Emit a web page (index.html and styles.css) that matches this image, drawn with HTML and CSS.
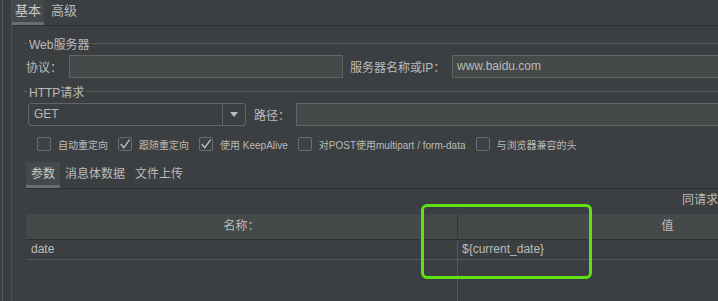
FILE: index.html
```html
<!DOCTYPE html>
<html lang="zh">
<head>
<meta charset="utf-8">
<title>HTTP请求</title>
<link rel="stylesheet" href="styles.css">
</head>
<body>
<div class="app">
  <div class="frame">
    <div class="main">
      <div class="tabs top">
        <div class="tab active">基本</div>
        <div class="tab">高级</div>
      </div>
      <div class="content">
        <div class="group-title"><span>Web服务器</span></div>
        <div class="row r1">
          <span class="lbl proto">协议：</span>
          <div class="field w-proto"></div>
          <span class="lbl host">服务器名称或IP：</span>
          <div class="field grow">www.baidu.com</div>
        </div>
        <div class="group-title g2"><span>HTTP请求</span></div>
        <div class="row r2">
          <div class="select">
            <span class="sel-val">GET</span>
            <span class="sel-btn"><svg width="8" height="5" viewBox="0 0 8 5"><polygon points="0,0 8,0 4,5" fill="#bbbbbb"/></svg></span>
          </div>
          <span class="lbl path">路径：</span>
          <div class="field grow"></div>
        </div>
        <div class="checks">
          <div class="cb"><span class="box"></span><span>自动重定向</span></div>
          <div class="cb"><span class="box"><svg width="12" height="12" viewBox="0 0 12 12"><polyline points="1.8,6 4.8,9.6 10.6,1.6" fill="none" stroke="#c4c4c4" stroke-width="1.3"/></svg></span><span>跟随重定向</span></div>
          <div class="cb"><span class="box"><svg width="12" height="12" viewBox="0 0 12 12"><polyline points="1.8,6 4.8,9.6 10.6,1.6" fill="none" stroke="#c4c4c4" stroke-width="1.3"/></svg></span><span>使用 KeepAlive</span></div>
          <div class="cb"><span class="box"></span><span>对POST使用multipart / form-data</span></div>
          <div class="cb"><span class="box"></span><span>与浏览器兼容的头</span></div>
        </div>
        <div class="lower">
          <div class="tabs sub">
            <div class="stab active">参数</div>
            <div class="stab">消息体数据</div>
            <div class="stab">文件上传</div>
          </div>
          <div class="note">同请求一起发送参数：</div>
          <div class="table">
            <div class="thead">
              <div class="th">名称：</div>
              <div class="th">值</div>
            </div>
            <div class="tbody">
              <div class="col"><div class="td">date</div></div>
              <div class="col"><div class="td">${current_date}</div></div>
            </div>
          </div>
        </div>
      </div>
    </div>
  </div>
  <div class="highlight"></div>
</div>
</body>
</html>
```

FILE: styles.css
```css
body {
  margin: 0;
  background: #3c3f41;
  overflow: hidden;
  font-family: "Liberation Sans", "Noto Sans CJK SC", sans-serif;
  color: #bbbbbb;
}

.app {
  position: relative;
  width: 718px;
  height: 301px;
  overflow: hidden;
  display: flex;
  padding-left: 2px;
  box-sizing: border-box;
}

.frame {
  border-left: 1px solid #55585a;
  padding-left: 8px;
  flex: 1;
  display: flex;
  min-width: 0;
}

.main {
  border-left: 1px solid #4b4e50;
  flex: 1;
  display: flex;
  flex-direction: column;
  overflow: hidden;
  min-width: 0;
}

.tabs.top {
  display: flex;
  gap: 4px;
  height: 25px;
  border-bottom: 1px solid #2f3234;
  flex: none;
}

.tab {
  font-size: 13px;
  padding: 0 3px;
  height: 25px;
  line-height: 22px;
  box-sizing: border-box;
  border-bottom: 3px solid transparent;
  color: #bbbbbb;
}

.tab.active {
  background: #46494b;
  border-bottom-color: #6b6e71;
  color: #cccccc;
}

.content {
  width: 880px;
  flex: 1;
  min-height: 0;
  display: flex;
  flex-direction: column;
  padding: 9px 0 0 12px;
}

.group-title {
  display: flex;
  align-items: center;
  height: 16px;
  font-size: 12px;
  color: #bbbbbb;
  flex: none;
}

.group-title::before {
  content: "";
  width: 3px;
  border-top: 1px solid #5b5e60;
  margin-right: 2px;
}

.group-title::after {
  content: "";
  flex: 1;
  border-top: 1px solid #5b5e60;
  margin-left: 2px;
}

.g2 {
  margin-top: 5px;
}

.row {
  display: flex;
  align-items: center;
  height: 23px;
  flex: none;
}

.r1 {
  margin-top: 4px;
  padding-left: 2px;
}

.r2 {
  margin-top: 4px;
  padding-left: 4px;
}

.lbl {
  font-size: 12px;
  white-space: nowrap;
}

.proto {
  width: 43px;
}

.host {
  margin-left: 7px;
  width: 102px;
}

.path {
  margin-left: 8px;
  width: 42px;
}

.field {
  height: 23px;
  box-sizing: border-box;
  background: #45494a;
  border: 1px solid #646464;
  font-size: 12px;
  line-height: 21px;
  padding-left: 4px;
  color: #bbbbbb;
  white-space: nowrap;
}

.w-proto {
  width: 274px;
}

.grow {
  flex: 1;
}

.select {
  width: 218px;
  height: 23px;
  box-sizing: border-box;
  border: 1px solid #646464;
  border-radius: 3px;
  display: flex;
  font-size: 12px;
}

.sel-val {
  flex: 1;
  padding-left: 5px;
  line-height: 21px;
}

.sel-btn {
  width: 22px;
  border-left: 1px solid #646464;
  display: flex;
  align-items: center;
  justify-content: center;
}

.checks {
  display: flex;
  align-items: center;
  height: 14px;
  margin-top: 11px;
  padding-left: 13px;
  font-size: 10px;
  flex: none;
  white-space: nowrap;
}

.cb {
  display: flex;
  align-items: center;
  margin-right: 10px;
}

.box {
  width: 14px;
  height: 14px;
  box-sizing: border-box;
  border: 1px solid #6a6d6f;
  border-radius: 2px;
  margin-right: 7px;
  background: #3e4143;
  display: flex;
  align-items: center;
  justify-content: center;
}

.lower {
  margin: 11px 0 0 2px;
  flex: 1;
  min-height: 0;
  display: flex;
  flex-direction: column;
}

.tabs.sub {
  display: flex;
  height: 26px;
  border-bottom: 1px solid #2f3234;
  flex: none;
}

.stab {
  font-size: 12px;
  padding: 0 5px;
  height: 26px;
  line-height: 24px;
  box-sizing: border-box;
  border-bottom: 3px solid transparent;
}

.stab.active {
  background: #46494b;
  border-bottom-color: #6b6e71;
  color: #cccccc;
}

.note {
  height: 25px;
  line-height: 22px;
  font-size: 12px;
  padding-left: 656px;
  white-space: nowrap;
  flex: none;
}

.table {
  width: 851px;
  flex: 1;
  display: flex;
  flex-direction: column;
}

.thead {
  display: grid;
  grid-template-columns: 431px 420px;
  height: 26px;
  box-sizing: border-box;
  background: #45494a;
  border-bottom: 1px solid #2d2f31;
  font-size: 12px;
  flex: none;
}

.th {
  line-height: 25px;
  text-align: center;
}

.th + .th {
  border-left: 1px solid #343638;
}

.tbody {
  display: grid;
  grid-template-columns: 431px 420px;
  flex: 1;
}

.col {
  display: flex;
  flex-direction: column;
}

.col + .col {
  border-left: 1px solid #555759;
}

.td {
  height: 20px;
  box-sizing: border-box;
  border-bottom: 1px solid #555759;
  line-height: 19px;
  padding-left: 5px;
  font-size: 12px;
}

.col + .col .td {
  padding-left: 4px;
}

.highlight {
  position: absolute;
  left: 421px;
  top: 204px;
  width: 171px;
  height: 75px;
  box-sizing: border-box;
  border: 3px solid #5ee213;
  border-radius: 6px;
}
```
